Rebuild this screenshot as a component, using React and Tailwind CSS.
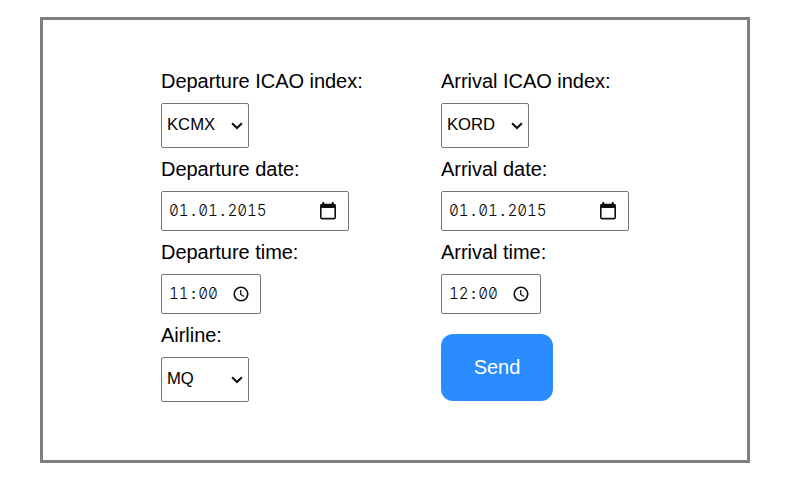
import React from "react";

const Chevron = () => (
  <svg width="12" height="8" viewBox="0 0 12 8" fill="none" className="shrink-0">
    <path d="M1.1 1.3 L6 6.1 L10.9 1.3" stroke="#101010" strokeWidth="2.1" />
  </svg>
);

const CalendarIcon = () => (
  <svg width="16" height="18" viewBox="0 0 16 18" className="shrink-0">
    <path
      fill="#101010"
      fillRule="evenodd"
      d="M2.4 0H4.2V1.8H11.8V0H13.6V1.8H14.2A1.8 1.8 0 0 1 16 3.6V15.6A1.8 1.8 0 0 1 14.2 17.4H1.8A1.8 1.8 0 0 1 0 15.6V3.6A1.8 1.8 0 0 1 1.8 1.8H2.4ZM1.6 5.9V15.8H14.4V5.9Z"
    />
  </svg>
);

const ClockIcon = () => (
  <svg width="16" height="16" viewBox="0 0 16 16" fill="none" stroke="#101010" className="shrink-0">
    <circle cx="8" cy="8" r="6.8" strokeWidth="1.6" />
    <path d="M7.7 4V8.5L11 10.5" strokeWidth="1.3" />
  </svg>
);

const Label = ({ children }) => (
  <label className="block h-[23px] whitespace-nowrap text-[20px] leading-[23px] tracking-[-0.03px]">{children}</label>
);

const Select = ({ value }) => (
  <button
    type="button"
    className="mt-[10px] mb-[10px] flex h-[45px] w-[88px] items-center justify-between rounded-[2px] border border-[#767676] pr-[5px] pl-[5px] text-[16.67px]"
  >
    <span className="-mt-[2px]">{value}</span>
    <Chevron />
  </button>
);

// Digits are tabular; separators get a full digit-wide cell of their own.
const Digits = ({ value }) => (
  <span className="font-['Inter',monospace] text-[15.2px] font-[350] tracking-[-0.08px] whitespace-nowrap tabular-nums slashed-zero">
    {value.split(/([.:])/).map((part, i) =>
      i % 2 ? (
        <span key={i} className="inline-block w-[9.8px] text-center font-normal">
          {part}
        </span>
      ) : (
        part
      )
    )}
  </span>
);

const DateField = ({ value }) => (
  <div className="mt-[10px] mb-[10px] flex h-[40px] w-[188px] items-center justify-between rounded-[2px] border border-[#767676] pr-[12px] pl-[7px]">
    <Digits value={value} />
    <CalendarIcon />
  </div>
);

const TimeField = ({ value }) => (
  <div className="mt-[10px] mb-[10px] flex h-[40px] w-[100px] items-center justify-between rounded-[2px] border border-[#767676] pr-[11px] pl-[7px]">
    <Digits value={value} />
    <ClockIcon />
  </div>
);

export default function App() {
  return (
    <div className="h-[477px] w-[789px] bg-white pt-[17px] pl-[40px] font-['Liberation_Sans',Arial,sans-serif] text-black">
      <form className="grid h-[446px] w-[710px] grid-cols-[280px_280px] content-start border-[3px] border-[#808080] pt-[50px] pl-[118px]">
        <div>
          <Label>Departure ICAO index:</Label>
          <Select value="KCMX" />
          <Label>Departure date:</Label>
          <DateField value="01.01.2015" />
          <Label>Departure time:</Label>
          <TimeField value="11:00" />
          <Label>Airline:</Label>
          <Select value="MQ" />
        </div>
        <div>
          <Label>Arrival ICAO index:</Label>
          <Select value="KORD" />
          <Label>Arrival date:</Label>
          <DateField value="01.01.2015" />
          <Label>Arrival time:</Label>
          <TimeField value="12:00" />
          <button
            type="button"
            className="mt-[20px] flex h-[67px] w-[112px] items-center justify-center rounded-[12px] bg-[#2a8cff] pb-[1px] text-[20px] text-white"
          >
            Send
          </button>
        </div>
      </form>
    </div>
  );
}
